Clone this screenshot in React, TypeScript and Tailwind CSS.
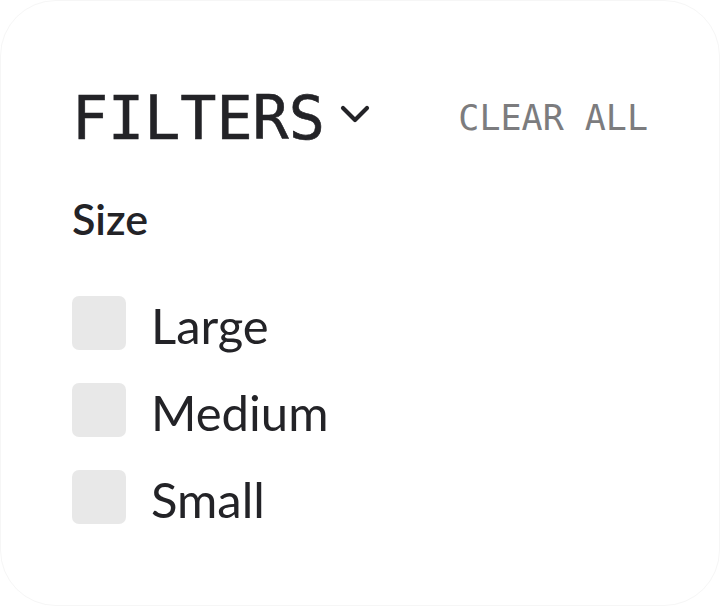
import React from "react";

const items = ["Large", "Medium", "Small"];

export default function App() {
  return (
    <div className="w-[720px] h-[606px] bg-white">
      <div className="w-[720px] h-[606px] rounded-[56px] border border-[#f6f6f6] bg-white pt-[87px] pl-[71px] pr-[71px] flex flex-col">
        <div className="flex items-center justify-between">
          <div className="flex items-center">
            <span className="text-[60px] leading-none text-[#232327] font-['DejaVu_Sans_Mono',monospace] [-webkit-text-stroke:0.6px_#232327]">
              FILTERS
            </span>
            <svg width="32" height="30" viewBox="0 0 32 30" className="ml-[14px] mt-[-6px]" fill="none">
              <polyline points="4,8 16,20 28,8" stroke="#232327" strokeWidth="4.2" strokeLinecap="round" strokeLinejoin="round" />
            </svg>
          </div>
          <span className="text-[35px] leading-none text-[#7c7c7e] font-['DejaVu_Sans_Mono',monospace] ml-[-4px]">
            CLEAR ALL
          </span>
        </div>
        <div className="mt-[49px] text-[43px] leading-none font-semibold text-[#232327] font-['Lato',sans-serif]">
          Size
        </div>
        <div className="mt-[56px] flex flex-col gap-[33px]">
          {items.map((t) => (
            <label key={t} className="flex items-center gap-[25px]">
              <span className="w-[54px] h-[54px] rounded-[7px] bg-[#e8e8e8] shrink-0" />
              <span className="text-[49px] leading-none text-[#232327] font-['Lato',sans-serif] mt-[4px]">
                {t}
              </span>
            </label>
          ))}
        </div>
      </div>
    </div>
  );
}
